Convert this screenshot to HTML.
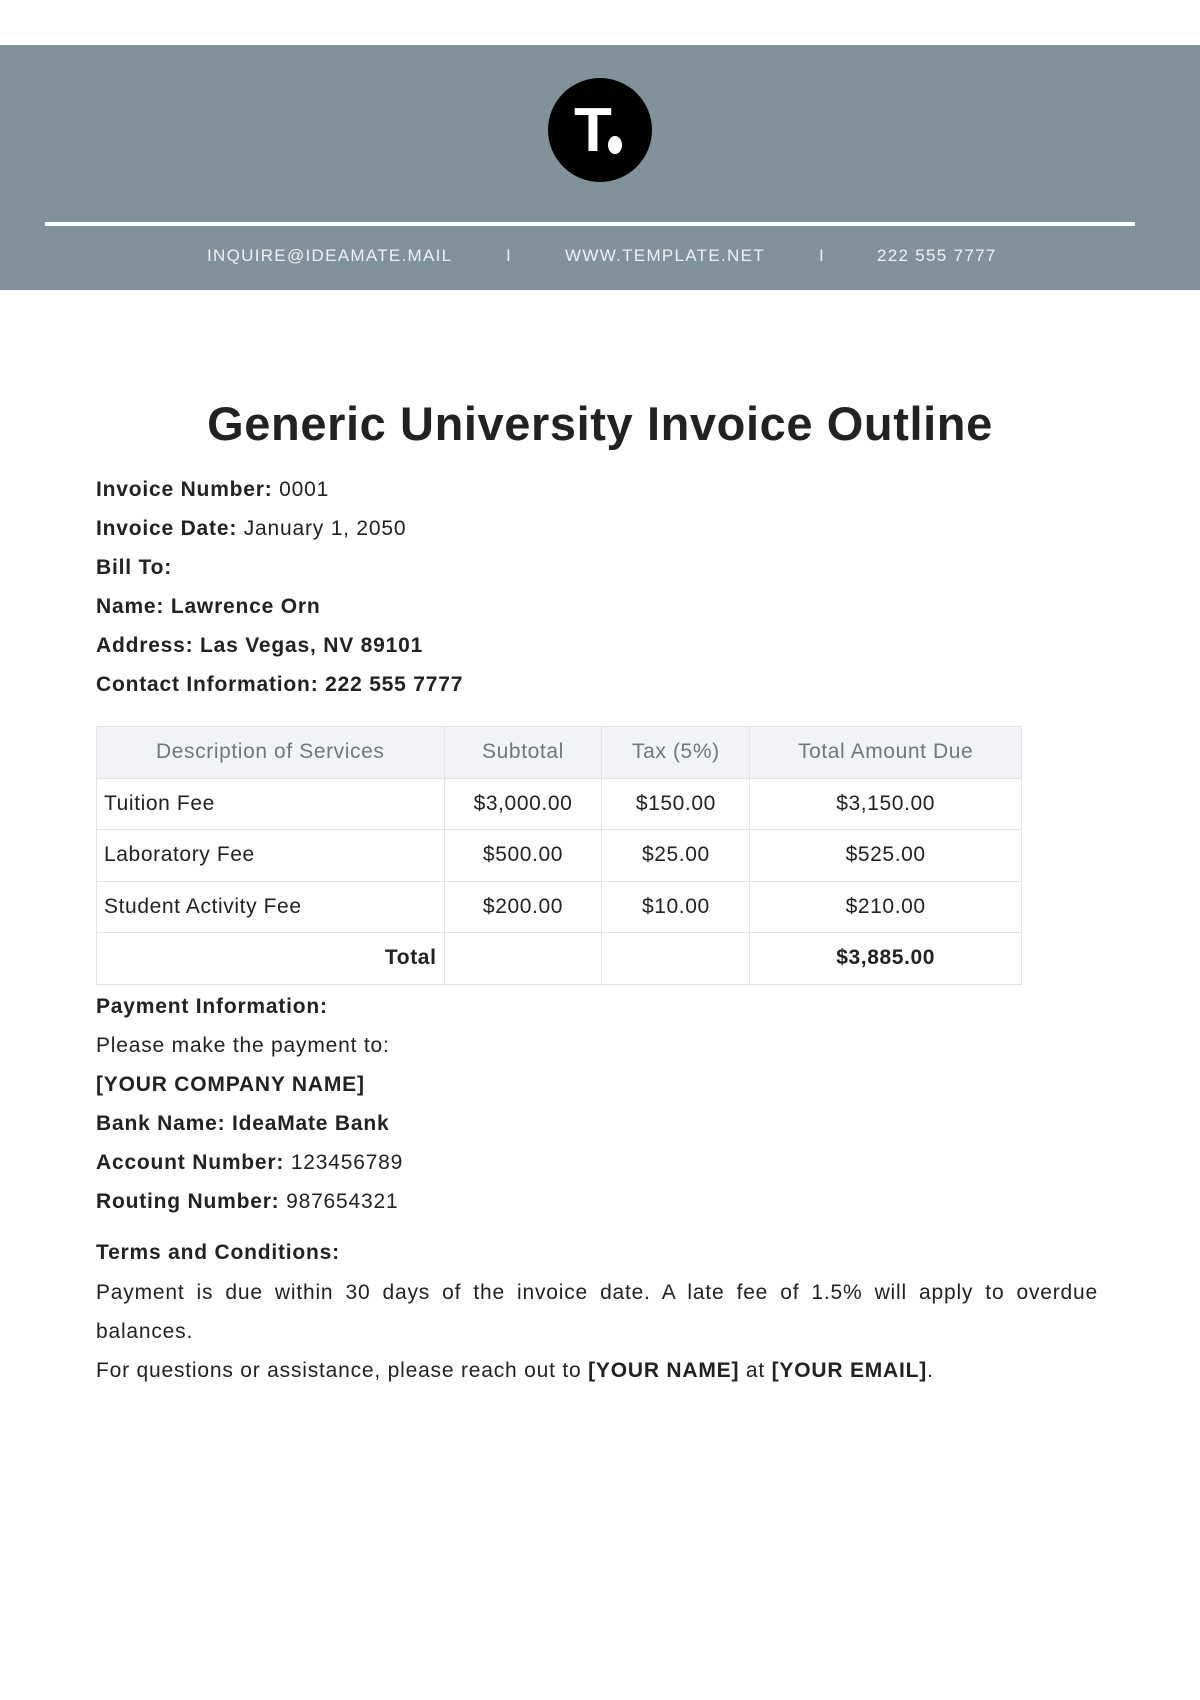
<!DOCTYPE html>
<html><head><meta charset="utf-8"><style>
*{margin:0;padding:0;box-sizing:border-box}
body{width:1200px;height:1700px;background:#fff;font-family:"Liberation Sans",sans-serif;color:#222;position:relative;overflow:hidden}
.band{position:absolute;left:0;top:45px;width:1200px;height:245px;background:#82929a}
.logo{position:absolute;left:548px;top:78px;width:104px;height:104px;border-radius:50%;background:#000}
.logo .t{position:absolute;left:26px;top:18px;color:#fff;font-weight:bold;font-size:62px;line-height:70px}
.logo .d{position:absolute;left:60px;top:58px;width:14px;height:18px;border-radius:50%;background:#fff}
.rule{position:absolute;left:45px;top:222px;width:1090px;height:4px;background:#fff}
.contact{position:absolute;top:246px;font-size:17px;color:#eef1f3;letter-spacing:1.3px}
h1{position:absolute;left:0;width:1200px;top:396px;text-align:center;font-size:47px;font-weight:bold;color:#222;letter-spacing:.6px}
.l{position:absolute;left:96px;font-size:21px;white-space:nowrap;letter-spacing:.8px}
b{font-weight:bold}
table{position:absolute;left:96px;top:726px;width:926px;border-collapse:collapse;font-size:21px;letter-spacing:.6px}
td,th{border:1.5px solid #e2e4e7;height:51.5px;padding:0 7px}
th{background:#f1f3f6;color:#6f787f;font-weight:normal;text-align:center}
td.c{text-align:center}
.p{position:absolute;left:96px;width:1002px;font-size:21px;line-height:39px;text-align:justify;letter-spacing:.8px}
</style></head><body>
<div class="band"></div>
<div class="logo"><span class="t">T</span><span class="d"></span></div>
<div class="rule"></div>
<div class="contact" style="left:207px">INQUIRE@IDEAMATE.MAIL</div>
<div class="contact" style="left:506px">I</div>
<div class="contact" style="left:565px">WWW.TEMPLATE.NET</div>
<div class="contact" style="left:819px">I</div>
<div class="contact" style="left:877px">222 555 7777</div>
<h1>Generic University Invoice Outline</h1>
<div class="l" style="top:478px"><b>Invoice Number:</b> 0001</div>
<div class="l" style="top:517px"><b>Invoice Date:</b> January 1, 2050</div>
<div class="l" style="top:556px"><b>Bill To:</b></div>
<div class="l" style="top:595px"><b>Name: Lawrence Orn</b></div>
<div class="l" style="top:634px"><b>Address: Las Vegas, NV 89101</b></div>
<div class="l" style="top:673px"><b>Contact Information: 222 555 7777</b></div>
<table>
<colgroup><col style="width:348px"><col style="width:158px"><col style="width:148px"><col style="width:272px"></colgroup>
<tr><th>Description of Services</th><th>Subtotal</th><th>Tax (5%)</th><th>Total Amount Due</th></tr>
<tr><td>Tuition Fee</td><td class="c">$3,000.00</td><td class="c">$150.00</td><td class="c">$3,150.00</td></tr>
<tr><td>Laboratory Fee</td><td class="c">$500.00</td><td class="c">$25.00</td><td class="c">$525.00</td></tr>
<tr><td>Student Activity Fee</td><td class="c">$200.00</td><td class="c">$10.00</td><td class="c">$210.00</td></tr>
<tr><td style="text-align:right"><b>Total</b></td><td></td><td></td><td class="c"><b>$3,885.00</b></td></tr>
</table>
<div class="l" style="top:995px"><b>Payment Information:</b></div>
<div class="l" style="top:1034px">Please make the payment to:</div>
<div class="l" style="top:1073px"><b>[YOUR COMPANY NAME]</b></div>
<div class="l" style="top:1112px"><b>Bank Name: IdeaMate Bank</b></div>
<div class="l" style="top:1151px"><b>Account Number:</b> 123456789</div>
<div class="l" style="top:1190px"><b>Routing Number:</b> 987654321</div>
<div class="l" style="top:1241px"><b>Terms and Conditions:</b></div>
<div class="p" style="top:1273px">Payment is due within 30 days of the invoice date. A late fee of 1.5% will apply to overdue balances.<br>For questions or assistance, please reach out to <b>[YOUR NAME]</b> at <b>[YOUR EMAIL]</b>.</div>
</body></html>
